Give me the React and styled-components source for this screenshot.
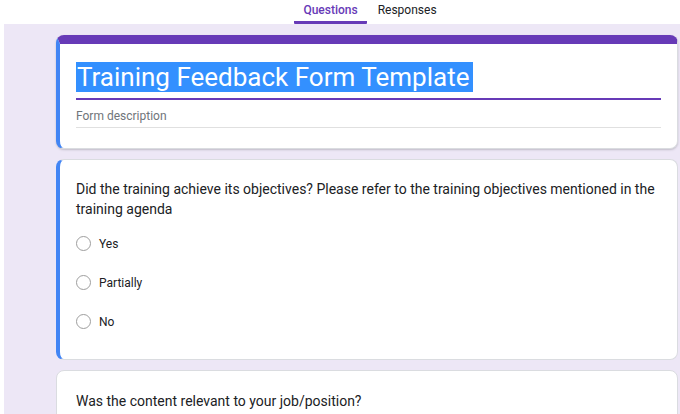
import React from 'react';
import styled, { createGlobalStyle } from 'styled-components';

const GlobalStyle = createGlobalStyle`
  html, body {
    margin: 0;
    padding: 0;
    background: #fff;
    font-family: Roboto, "Open Sans", Arial, sans-serif;
    overflow: hidden;
  }
`

const Page = styled.div`
  width: 680px;
  height: 414px;
  display: flex;
  flex-direction: column;
`

const TabBar = styled.div`
  height: 24px;
  display: flex;
  justify-content: center;
  gap: 2px;
  padding-left: 60px;
  background: #fff;
`

const Tab = styled.div`
  padding: 0 9px;
  font-size: 12px;
  font-weight: ${p => (p.active ? 500 : 400)};
  line-height: 20px;
  color: ${p => (p.active ? '#673ab7' : '#202124')};
  border-bottom: 3px solid ${p => (p.active ? '#673ab7' : 'transparent')};
  border-radius: 0 0 1px 1px;
`

const Canvas = styled.div`
  flex: 1;
  margin-left: 4px;
  background: #ede7f6;
  padding: 11px 2px 0 52px;
  display: flex;
  flex-direction: column;
  gap: 10px;
  overflow: hidden;
`

const Card = styled.div`
  background: #fff;
  border-radius: 8px;
  border: 1px solid #dadce0;
  border-left: ${p => (p.focused ? '4px solid #4285f4' : '1px solid #dadce0')};
  padding: ${p => p.pad};
  flex-shrink: 0;
`

const HeaderCard = styled(Card)`
  border-top: 9px solid #673ab7;
  box-shadow: 0 1px 2px rgba(60, 64, 67, 0.25);
`

const Title = styled.div`
  font-size: 26px;
  line-height: 32px;
  color: #202124;
  padding-bottom: 5px;
  border-bottom: 2px solid #673ab7;
`

const Selected = styled.span`
  background: #3390ff;
  color: #fff;
  padding: 0 4px 0 1px;
`

const Description = styled.div`
  font-size: 12px;
  color: #70757a;
  padding: 9px 0 4px;
  border-bottom: 1px solid #e0e0e0;
`

const Question = styled.div`
  font-size: 14px;
  line-height: 20px;
  color: #202124;
`

const Options = styled.div`
  display: flex;
  flex-direction: column;
  gap: 24px;
  margin-top: 17px;
`

const Option = styled.label`
  display: flex;
  align-items: center;
  gap: 8px;
  font-size: 12px;
  color: #202124;
`

const Radio = styled.span`
  width: 13px;
  height: 13px;
  border-radius: 50%;
  border: 1.5px solid #9e9e9e;
  flex-shrink: 0;
`

const options = ['Yes', 'Partially', 'No'];

const App = () => {
  return (
    <Page>
      <GlobalStyle />
      <TabBar>
        <Tab active>Questions</Tab>
        <Tab>Responses</Tab>
      </TabBar>
      <Canvas>
        <HeaderCard focused pad="17px 16px 20px 16px">
          <Title><Selected>Training Feedback Form Template</Selected></Title>
          <Description>Form description</Description>
        </HeaderCard>

        <Card focused pad="19px 16px 30px 16px">
          <Question>
            Did the training achieve its objectives? Please refer to the training objectives mentioned in the training agenda
          </Question>
          <Options>
            {options.map((label, key) =>
              <Option key={key}>
                <Radio />
                {label}
              </Option>
            )}
          </Options>
        </Card>

        <Card pad="20px 16px 30px 19px">
          <Question>Was the content relevant to your job/position?</Question>
        </Card>
      </Canvas>
    </Page>
  )
}

export default App;
